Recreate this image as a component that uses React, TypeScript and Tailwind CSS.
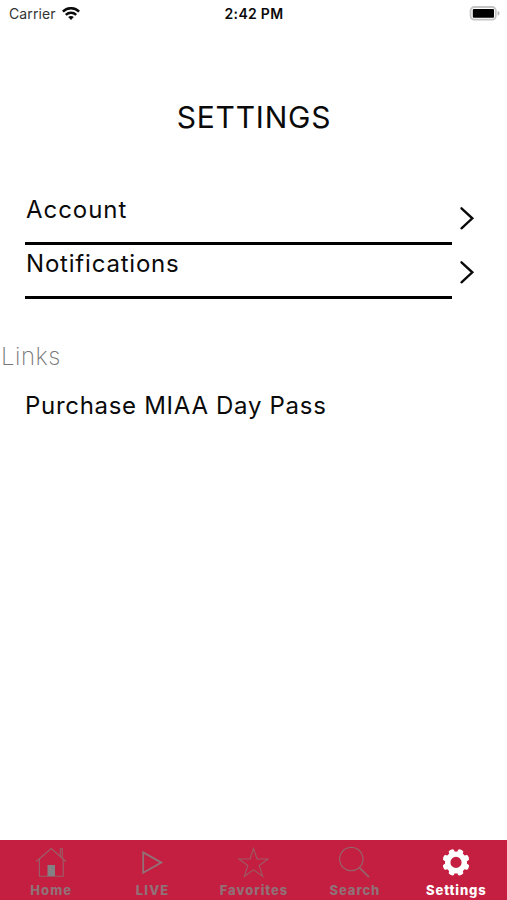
import React from "react";

const TOOTH_ANGLES = [22.5, 67.5, 112.5, 157.5, 202.5, 247.5, 292.5, 337.5];

function Chevron() {
  return (
    <svg className="h-6 w-4" viewBox="0 0 16 24" fill="none" stroke="#0a0a0a" strokeWidth="2.4" strokeLinecap="round">
      <path d="M2.5 2.3 L13.3 12.3 L2.5 22.3" />
    </svg>
  );
}

function WifiIcon() {
  return (
    <svg className="h-[14px] w-[18px]" viewBox="0 0 18 14" fill="none" stroke="#0a0a0a" strokeWidth="2.5">
      <path d="M0.9 4.6 C5.4 0.1 12.6 0.1 17.1 4.6" />
      <path d="M3.8 7.8 C6.8 5 11.2 5 14.2 7.8" />
      <path d="M6.2 10.1 C7.8 8.7 10.2 8.7 11.8 10.1 L9 13.1 Z" fill="#0a0a0a" stroke="none" />
    </svg>
  );
}

function BatteryIcon() {
  return (
    <svg className="h-4 w-8" viewBox="0 0 32 16">
      <rect x="1.6" y="1" width="25.2" height="12.6" rx="3.6" fill="#fff" stroke="#c4c4c4" strokeWidth="1.8" />
      <rect x="3.8" y="2.9" width="21.2" height="8.8" rx="1" fill="#000" />
      <path d="M28.6 5 C31.2 5.6 31.2 9 28.6 9.6 Z" fill="#b5b5b5" />
    </svg>
  );
}

function HomeIcon() {
  return (
    <svg className="h-8 w-8" viewBox="0 0 32 32" fill="none" stroke="#986069" strokeWidth="1.1">
      <path d="M1.2 15.5 L16.3 2.5 L31 15.5" />
      <path d="M4.4 13 V30.3 H28.2 V13" />
      <path d="M25.3 10.5 V2.8 H27.3 V12.2" />
      <rect x="12.5" y="19" width="7.5" height="11" fill="#858083" stroke="none" />
    </svg>
  );
}

function LiveIcon() {
  return (
    <svg className="h-8 w-8" viewBox="0 0 32 32" fill="none" stroke="#927078" strokeWidth="1.8">
      <path d="M7.2 6.4 L25.4 16.6 L7.2 26.8 Z" />
    </svg>
  );
}

function StarIcon() {
  return (
    <svg className="h-8 w-8" viewBox="0 0 32 32" fill="none" stroke="#9d5964" strokeWidth="1.1">
      <path d="M16.5 2.5 L20 13 H31.2 L22.2 19.5 L25.7 30.3 L16.5 23.8 L7.3 30.3 L10.8 19.5 L1.8 13 H13 Z" />
    </svg>
  );
}

function SearchIcon() {
  return (
    <svg className="h-8 w-8" viewBox="0 0 32 32" fill="none" stroke="#986069">
      <circle cx="12.3" cy="13" r="11.7" strokeWidth="1.2" />
      <path d="M20.6 21.8 L30 31.2" strokeWidth="1.9" />
    </svg>
  );
}

function GearIcon() {
  return (
    <svg className="h-8 w-8" viewBox="0 0 32 32" fill="none" stroke="#fff">
      <circle cx="16" cy="16.4" r="8.3" strokeWidth="5.4" />
      {TOOTH_ANGLES.map((angle) => (
        <rect
          key={angle}
          x="13.1"
          y="2.8"
          width="5.8"
          height="5.5"
          rx="2"
          fill="#fff"
          stroke="none"
          transform={`rotate(${angle} 16 16.4)`}
        />
      ))}
    </svg>
  );
}

const tabs = [
  { label: "Home", Icon: HomeIcon, style: "pl-px text-[#927078] tracking-[1px]" },
  { label: "LIVE", Icon: LiveIcon, style: "pl-px text-[#927078] tracking-[1.2px]" },
  { label: "Favorites", Icon: StarIcon, style: "pl-px text-[#927078] tracking-[0.95px]" },
  { label: "Search", Icon: SearchIcon, style: "text-[#927078] tracking-[0.9px]" },
  { label: "Settings", Icon: GearIcon, style: "text-white tracking-[0.9px]" },
];

const rows = [
  { label: "Account", style: "tracking-[0.95px]" },
  { label: "Notifications", style: "tracking-[0.8px]" },
];

export default function App() {
  return (
    <div className="flex h-[900px] w-[507px] flex-col overflow-hidden bg-white font-['Inter','Liberation_Sans',sans-serif] text-[#0a0a0a]">
      <header className="grid h-7 grid-cols-3 items-center">
        <div className="flex items-center gap-1.5 pl-[9px]">
          <span className="text-sm tracking-[0.1px] text-[#333]">Carrier</span>
          <WifiIcon />
        </div>
        <span className="pl-px text-center text-sm font-semibold tracking-[0.3px]">2:42 PM</span>
        <div className="flex justify-end pr-1.5">
          <BatteryIcon />
        </div>
      </header>

      <h1 className="mt-[69px] h-10 pl-px text-center text-[30px] leading-10 font-normal tracking-[0.8px] whitespace-nowrap">
        SETTINGS
      </h1>

      <main className="flex-1">
        <ul className="mt-[54px]">
          {rows.map((row) => (
            <li key={row.label} className="flex h-[54px] pl-[25px]">
              <div className="w-[427px] border-b-3 border-black">
                <span className={`block pl-px text-2xl leading-[38px] font-normal ${row.style}`}>{row.label}</span>
              </div>
              <div className="pt-[15px] pl-[7px]">
                <Chevron />
              </div>
            </li>
          ))}
        </ul>
        <h2 className="mt-[38px] pl-px text-2xl leading-10 font-extralight tracking-[0.5px] text-[#777]">Links</h2>
        <a className="mt-[9px] block pl-[25px] text-2xl leading-10 font-normal tracking-[0.7px]">Purchase MIAA Day Pass</a>
      </main>

      <nav className="grid h-[60px] grid-cols-5 bg-[#c41f40]">
        {tabs.map(({ label, Icon, style }) => (
          <div key={label} className="flex flex-col items-center pt-[6px]">
            <Icon />
            <span className={`mt-1 text-[13px] leading-4 font-extrabold ${style}`}>{label}</span>
          </div>
        ))}
      </nav>
    </div>
  );
}
